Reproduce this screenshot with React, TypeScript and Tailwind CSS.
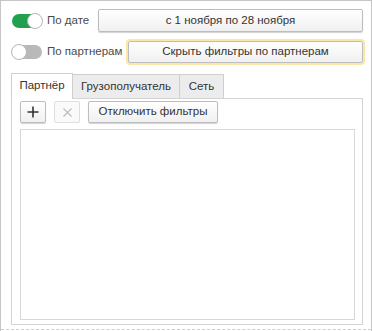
import React from "react";

const font = { fontFamily: '"Liberation Sans", Arial, sans-serif' };

function Toggle({ on }: { on: boolean }) {
  return (
    <div className="relative w-[30px] h-[14px] shrink-0">
      <div className={`absolute inset-0 rounded-full ${on ? "bg-[#23a04d]" : "bg-[#b9b9b9]"}`} />
      <div
        className={`absolute top-[-1px] w-[16px] h-[16px] rounded-full bg-white border border-[#b5b5b5] ${on ? "right-[-1px]" : "left-[-1px]"}`}
      />
    </div>
  );
}

const btn =
  "flex shrink-0 items-center justify-center whitespace-nowrap rounded-[2px] border border-[#bdbdbd] bg-gradient-to-b from-white to-[#f0f0f0] shadow-[0_1px_1px_rgba(0,0,0,0.18)] text-[11.5px] text-[#333]";

export default function App() {
  return (
    <div style={font} className="relative w-[372px] h-[331px] bg-white border-x border-t border-[#c6c6c6] text-[#333]">
      <div className="mt-[8px] flex items-center h-[23px]">
        <div className="flex shrink-0 items-center w-[97px] pl-[11px]">
          <Toggle on={true} />
          <span className="ml-[5px] whitespace-nowrap text-[11.5px] text-[#4a4a4a]">По дате</span>
        </div>
        <div className={`${btn} w-[265px] h-[23px]`}>с 1 ноября по 28 ноября</div>
      </div>
      <div className="mt-[8px] flex items-center h-[23px]">
        <div className="flex shrink-0 items-center w-[127px] pl-[11px]">
          <Toggle on={false} />
          <span className="ml-[5px] whitespace-nowrap text-[11.5px] text-[#4a4a4a]">По партнерам</span>
        </div>
        <div className={`${btn} w-[235px] h-[22px] ring-2 ring-[#fbe8a6]`}>Скрыть фильтры по партнерам</div>
      </div>

      <div className="mt-[9px] ml-[10px] flex items-end h-[26px]">
        <div className="h-[26px] w-[62px] shrink-0 whitespace-nowrap bg-white border-x border-t border-[#cfcfcf] flex items-center justify-center text-[11.5px] text-[#333] relative z-10 mb-[-1px] pb-[1px]">
          Партнёр
        </div>
        <div className="h-[24px] w-[107px] shrink-0 whitespace-nowrap bg-[#ececec] border-t border-r border-[#cfcfcf] flex items-center justify-center text-[11.5px] text-[#333]">
          Грузополучатель
        </div>
        <div className="h-[24px] w-[44px] shrink-0 whitespace-nowrap bg-[#ececec] border-t border-r border-[#cfcfcf] flex items-center justify-center text-[11.5px] text-[#333]">
          Сеть
        </div>
      </div>
      <div className="ml-[10px] w-[352px] h-[227px] border border-[#d4d4d4] pl-[8px] pt-[2px]">
        <div className="flex items-center gap-[8px] h-[22px]">
          <div className={`${btn} w-[26px] h-[22px]`}>
            <svg width="12" height="12" viewBox="0 0 12 12">
              <path d="M6 0.5V11.5M0.5 6H11.5" stroke="#333" strokeWidth="1.6" />
            </svg>
          </div>
          <div className="flex shrink-0 items-center justify-center rounded-[2px] border border-[#dedede] bg-[#fafafa] w-[26px] h-[22px]">
            <svg width="9" height="9" viewBox="0 0 9 9">
              <path d="M0.5 0.5L8.5 8.5M8.5 0.5L0.5 8.5" stroke="#bdbdbd" strokeWidth="1.2" />
            </svg>
          </div>
          <div className={`${btn} w-[130px] h-[22px]`}>Отключить фильтры</div>
        </div>
        <div className="mt-[6px] w-[335px] h-[191px] border border-[#d8d8d8] bg-white" />
      </div>
      <div className="absolute left-0 right-0 bottom-[1px] border-b border-dashed border-[#d0d0d0]" />
    </div>
  );
}
